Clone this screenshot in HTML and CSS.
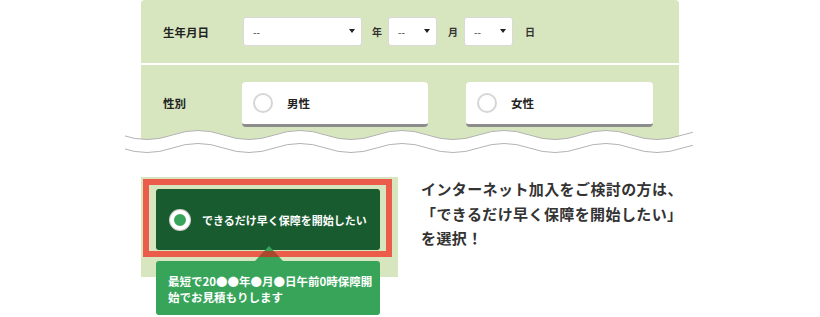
FILE: index.html
```html
<!DOCTYPE html>
<html lang="ja">

<head>
  <meta charset="UTF-8">
  <meta name="viewport" content="width=device-width, initial-scale=1.0">
  <title>お見積もり</title>
  <link rel="stylesheet" href="styles.css">
</head>

<body>
  <div class="page">
    <!-- 入力フォーム -->
    <div class="form-panel">
      <div class="form-row row-birth">
        <div class="form-label">生年月日</div>
        <div class="form-field">
          <div class="select select-lg"><span>--</span></div>
          <span class="unit unit-year">年</span>
          <div class="select select-sm"><span>--</span></div>
          <span class="unit unit-month">月</span>
          <div class="select select-sm"><span>--</span></div>
          <span class="unit unit-day">日</span>
        </div>
      </div>
      <div class="form-row row-gender">
        <div class="form-label">性別</div>
        <div class="form-field">
          <div class="radio-card"><span class="radio"></span>男性</div>
          <div class="radio-card card-female"><span class="radio"></span>女性</div>
        </div>
      </div>
    </div>

    <svg class="wave-cut" width="568" height="30" viewBox="0 0 568 30">
      <path fill="#fff" d="M-54.5 8 Q-29 -1 -3.5 8 T47.5 8 T98.5 8 T149.5 8 T200.5 8 T251.5 8 T302.5 8 T353.5 8 T404.5 8 T455.5 8 T506.5 8 T557.5 8 T608.5 8 L608.5 30 L-54.5 30 Z"/>
      <path id="wave-line" fill="none" stroke="#b3b3b3" stroke-width="1" d="M-54.5 8 Q-29 -1 -3.5 8 T47.5 8 T98.5 8 T149.5 8 T200.5 8 T251.5 8 T302.5 8 T353.5 8 T404.5 8 T455.5 8 T506.5 8 T557.5 8 T608.5 8"/>
      <use href="#wave-line" transform="translate(0 13)"/>
    </svg>

    <!-- 保障開始日の選択 -->
    <div class="plan">
      <div class="plan-choice">
        <div class="plan-frame">
          <div class="plan-btn"><span class="radio-on"></span>できるだけ早く保障を開始したい</div>
        </div>
        <svg class="tip-arrow" width="28" height="15" viewBox="0 0 28 15">
          <polygon fill="#37a45a" points="14,0 28,15 0,15"/>
          <polygon fill="#a9482c" points="9.33,5 18.67,5 24.27,11 3.73,11"/>
        </svg>
        <div class="tip">最短で20●●年●月●日午前0時保障開<br>始でお見積もりします</div>
      </div>
      <p class="plan-note">インターネット加入をご検討の方は、<br>「できるだけ早く保障を開始したい」<br>を選択！</p>
    </div>
  </div>
</body>

</html>
```

FILE: styles.css
```css
body {
  margin: 0;
  font-family: "Noto Sans CJK JP", "Noto Sans", sans-serif;
  color: #222;
  background: #fff;
}

.page {
  width: 820px;
  height: 317px;
  overflow: hidden;
}

.form-panel {
  margin-left: 141px;
  width: 538px;
  background: #d8e6bf;
  border-radius: 4px 4px 0 0;
}

.form-row {
  display: flex;
}

.row-birth {
  height: 63px;
  align-items: center;
  border-bottom: 2px solid #fff;
}

.row-gender {
  height: 63px;
  padding-top: 17px;
  align-items: flex-start;
}

.form-label {
  width: 80px;
  padding-left: 22px;
  font-size: 11.5px;
  font-weight: bold;
}

.row-gender .form-label {
  line-height: 42px;
}

.form-field {
  display: flex;
  align-items: center;
}

.select {
  position: relative;
  display: flex;
  align-items: center;
  box-sizing: border-box;
  height: 29px;
  padding-left: 9px;
  background: #fff;
  border: 1px solid #d9d9d9;
  border-radius: 3px;
  font-size: 10px;
  color: #333;
}

.select::after {
  content: "";
  position: absolute;
  right: 6px;
  top: 11px;
  border-left: 3.5px solid transparent;
  border-right: 3.5px solid transparent;
  border-top: 4px solid #222;
}

.select-lg {
  width: 119px;
}

.select-sm {
  width: 49px;
}

.unit {
  font-size: 10px;
  font-weight: bold;
  color: #333;
}

.unit-year {
  margin: 0 6px 0 10px;
}

.unit-month {
  margin: 0 6px 0 11px;
}

.unit-day {
  margin-left: 12px;
}

.radio-card {
  display: flex;
  align-items: center;
  box-sizing: border-box;
  width: 186px;
  height: 45px;
  margin-left: -1px;
  padding-left: 11px;
  background: #fff;
  border-bottom: 3px solid #8c8c8c;
  border-radius: 4px;
  font-size: 11.5px;
  font-weight: bold;
}

.card-female {
  width: 187px;
  margin-left: 38px;
}

.radio {
  box-sizing: border-box;
  width: 20px;
  height: 20px;
  margin-right: 14px;
  border: 2px solid #d6d6d6;
  border-radius: 50%;
}

.wave-cut {
  display: block;
  margin: -18px 0 0 125px;
}

.plan {
  display: flex;
  margin-top: 20px;
}

.plan-choice {
  position: relative;
  box-sizing: border-box;
  width: 257px;
  height: 100px;
  margin-left: 141px;
  padding: 2px 0 0 2px;
  background: #d8e6bf;
}

.plan-frame {
  box-sizing: border-box;
  width: 249px;
  height: 78px;
  padding: 4px 6px 1px 7px;
  border: 6px solid #ec5c4b;
}

.plan-btn {
  display: flex;
  align-items: center;
  height: 61px;
  padding-left: 14px;
  background: #185b2f;
  border-radius: 3px;
  color: #fff;
  font-size: 11px;
  font-weight: bold;
}

.radio-on {
  box-sizing: border-box;
  width: 20px;
  height: 20px;
  margin-right: 12px;
  background: #37a45a;
  border: 4px solid #fff;
  border-radius: 50%;
  box-shadow: 0 0 0 1px #cfcfcf;
}

.tip-arrow {
  position: absolute;
  left: 114px;
  top: 69px;
}

.tip {
  position: absolute;
  left: 15px;
  top: 84px;
  box-sizing: border-box;
  width: 224px;
  height: 54px;
  padding: 12px 6px 0 12px;
  background: #37a45a;
  border-radius: 3px;
  color: #fff;
  font-size: 11.5px;
  font-weight: bold;
  line-height: 16px;
  white-space: nowrap;
}

.plan-note {
  margin: 0 0 0 23px;
  font-size: 15px;
  font-weight: bold;
  line-height: 24.5px;
  letter-spacing: 0.4px;
  color: #333;
}
```
